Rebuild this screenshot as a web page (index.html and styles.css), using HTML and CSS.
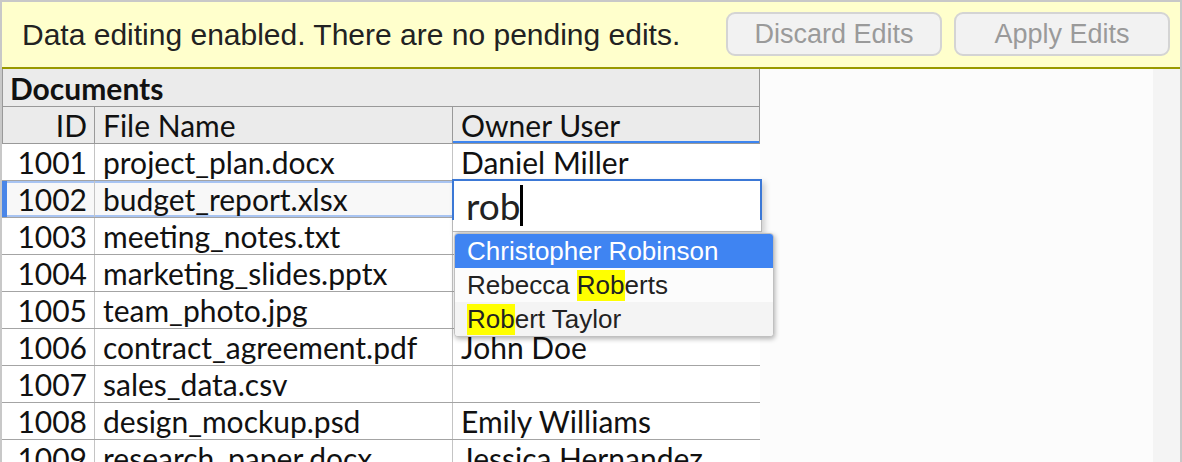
FILE: index.html
```html
<!DOCTYPE html>
<html>
<head>
<meta charset="utf-8">
<link rel="stylesheet" href="styles.css">
</head>
<body>
<div class="frame">
  <div class="topbar">
    <span class="msg">Data editing enabled. There are no pending edits.</span>
    <div class="btns">
      <button class="btn">Discard Edits</button>
      <button class="btn">Apply Edits</button>
    </div>
  </div>
  <div class="main">
    <div class="table">
      <div class="title">Documents</div>
      <div class="row head">
        <div class="c id">ID</div>
        <div class="c">File Name</div>
        <div class="c owner-head">Owner User</div>
      </div>
      <div class="row"><div class="c id">1001</div><div class="c">project_plan.docx</div><div class="c">Daniel Miller</div></div>
      <div class="row sel"><div class="c id">1002</div><div class="c">budget_report.xlsx</div><div class="c"></div></div>
      <div class="row"><div class="c id">1003</div><div class="c">meeting_notes.txt</div><div class="c"></div></div>
      <div class="row"><div class="c id">1004</div><div class="c">marketing_slides.pptx</div><div class="c"></div></div>
      <div class="row"><div class="c id">1005</div><div class="c">team_photo.jpg</div><div class="c"></div></div>
      <div class="row"><div class="c id">1006</div><div class="c">contract_agreement.pdf</div><div class="c">John Doe</div></div>
      <div class="row"><div class="c id">1007</div><div class="c">sales_data.csv</div><div class="c"></div></div>
      <div class="row"><div class="c id">1008</div><div class="c">design_mockup.psd</div><div class="c">Emily Williams</div></div>
      <div class="row"><div class="c id">1009</div><div class="c">research_paper.docx</div><div class="c">Jessica Hernandez</div></div>

      <div class="editor"><span class="typed">rob</span><span class="caret"></span></div>
      <div class="dropdown">
        <div class="opt active">Christopher Robinson</div>
        <div class="opt">Rebecca <span class="hl">Rob</span>erts</div>
        <div class="opt alt"><span class="hl">Rob</span>ert Taylor</div>
      </div>
    </div>
    <div class="side"></div>
    <div class="scroll"></div>
  </div>
</div>
</body>
</html>
```

FILE: styles.css
```css
html, body {
  margin: 0;
  padding: 0;
  background: #fdfdfd;
}

.frame {
  box-sizing: border-box;
  width: 1182px;
  height: 462px;
  overflow: hidden;
  border: 2px solid #c8c8c8;
  border-bottom: none;
  display: flex;
  flex-direction: column;
}

.topbar {
  height: 65px;
  flex: none;
  background: #ffffcc;
  border-bottom: 2px solid #999900;
  display: flex;
  align-items: center;
  justify-content: space-between;
  padding: 0 10px 0 20px;
}

.msg {
  font-family: "Liberation Sans", Arial, sans-serif;
  font-size: 30px;
  color: #222;
}

.btns {
  display: flex;
  gap: 12px;
  margin-top: -1px;
}

.btn {
  box-sizing: border-box;
  width: 216px;
  height: 44px;
  border: 2px solid #d4d4d4;
  border-radius: 9px;
  background: #f2f2f2;
  color: #9a9a9a;
  font-family: "Liberation Sans", Arial, sans-serif;
  font-size: 27px;
  padding: 0;
}

.main {
  flex: 1;
  display: flex;
  min-height: 0;
}

.table {
  position: relative;
  width: 758px;
  flex: none;
  background: #fff;
  font-family: Lato, "Noto Sans", sans-serif;
  font-size: 30px;
  color: #111;
}

.title {
  height: 38px;
  box-sizing: border-box;
  background: #ebebeb;
  border-left: 1px solid #999;
  border-right: 1px solid #999;
  border-bottom: 1px solid #999;
  font-weight: bold;
  line-height: 38px;
  padding-left: 7px;
}

.row {
  display: grid;
  grid-template-columns: 93px 358px 307px;
  height: 37px;
  box-sizing: border-box;
  border-bottom: 1px solid #a4a4a4;
  position: relative;
}

.c {
  line-height: 36px;
  padding-left: 8px;
  white-space: nowrap;
  overflow: hidden;
  border-right: 1px solid #c4c4c4;
}

.c.id {
  text-align: right;
  padding-left: 0;
  padding-right: 7px;
}

.c:last-child {
  border-right: none;
}

.head {
  background: #ebebeb;
  border-bottom: 1px solid #999;
  border-left: 1px solid #999;
  border-right: 1px solid #999;
  grid-template-columns: 92px 358px 306px;
}

.head .c {
  border-right: 1px solid #999;
}

.head .c:last-child {
  border-right: none;
}

.owner-head {
  box-shadow: inset 0 -2px #3d85f0;
}

.row.sel {
  background: #f8f8f8;
  box-shadow: inset 0 2px #a8c4f2, inset 0 -2px #a8c4f2;
}

.row.sel::before {
  content: "";
  position: absolute;
  left: 0;
  top: 0;
  bottom: 0;
  width: 5px;
  background: #4a86e8;
}

.editor {
  position: absolute;
  left: 450px;
  top: 110px;
  width: 310px;
  height: 53px;
  box-sizing: border-box;
  background: #fff;
  border: 1px solid #b8b8b8;
  border-top: none;
  box-shadow: 3px 3px 6px rgba(0, 0, 0, 0.18);
  display: flex;
  align-items: center;
  padding-left: 13px;
  padding-top: 1px;
}

.editor::before {
  content: "";
  position: absolute;
  left: -1px;
  right: -1px;
  top: 0;
  height: 41px;
  border: 2px solid #3b78d6;
  border-bottom: none;
  box-sizing: border-box;
}

.typed {
  font-family: Lato, "Noto Sans", sans-serif;
  font-size: 37px;
  color: #222;
}

.caret {
  display: inline-block;
  width: 2.5px;
  height: 41px;
  background: #000;
  margin-left: 0;
}

.dropdown {
  position: absolute;
  left: 452px;
  top: 164px;
  width: 320px;
  box-sizing: border-box;
  border: 1px solid #c0c0c0;
  border-radius: 4px;
  background: #fcfcfc;
  box-shadow: 1px 2px 5px rgba(0, 0, 0, 0.3);
  overflow: hidden;
  font-family: "Liberation Sans", Arial, sans-serif;
  font-size: 26px;
  color: #222;
}

.opt {
  height: 34px;
  line-height: 34px;
  padding-left: 12px;
  white-space: nowrap;
}

.opt.active {
  background: #3f84f2;
  color: #fff;
}

.opt.alt {
  background: #f4f4f4;
}

.hl {
  background: #ffff00;
  display: inline-block;
  line-height: 31px;
}

.side {
  flex: 1;
  background: #fcfcfc;
}

.scroll {
  width: 27px;
  flex: none;
  background: #f4f4f4;
}
```
